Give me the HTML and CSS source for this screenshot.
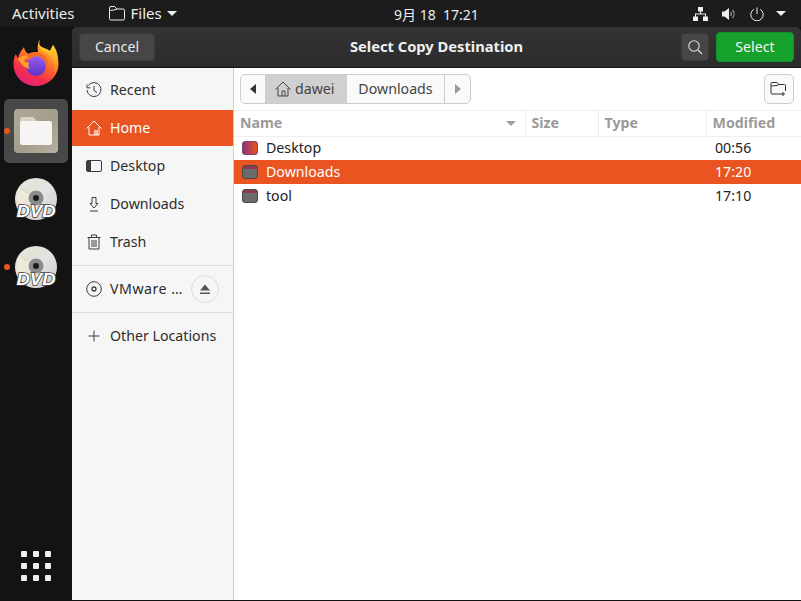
FILE: index.html
```html
<!DOCTYPE html>
<html lang="en">
<head>
<meta charset="utf-8">
<title>Select Copy Destination</title>
<link rel="stylesheet" href="styles.css">
</head>
<body>
<header class="topbar">
  <div class="top-left">
    <span class="activities">Activities</span>
    <span class="appmenu">
      <svg width="16" height="15" viewBox="0 0 16 15"><path d="M.5 12.500V2a1.500 1.500 0 0 1 1.500-1.500h3.500L8 3h6a1.500 1.500 0 0 1 1.500 1.500v8A1.500 1.500 0 0 1 14 14H2a1.500 1.500 0 0 1-1.500-1.500zM.5 4.500 5 4l3-1" fill="none" stroke="#eee" stroke-width="1"/></svg>
      <span class="menu-text">Files</span>
      <span class="caret"></span>
    </span>
  </div>
  <div class="clock">9月 18&nbsp; 17:21</div>
  <div class="tray">
    <svg width="15" height="14" viewBox="0 0 15 14"><path d="M5 0h5v4.500H8V6.500h5V9.500h2V14h-5V9.500h2V7.500H3v2h2V14H0V9.500h2V6.500h5V4.500H5z" fill="#eee"/></svg>
    <svg width="14" height="14" viewBox="0 0 14 14"><path d="M0 4.500h2.500L7 1v12L2.500 9.500H0z" fill="#eee"/><path d="M8.500 5a3 3 0 0 1 0 4M10.500 3a6 6 0 0 1 0 8" fill="none" stroke="#999" stroke-width="1.200"/></svg>
    <svg width="14" height="14" viewBox="0 0 14 14"><path d="M3.800 2.300a6.200 6.200 0 1 0 6.400 0M7 .5v6.500" fill="none" stroke="#eee" stroke-width="1"/></svg>
    <span class="caret tray-caret"></span>
  </div>
</header>
<div class="desktop">
  <nav class="dock">
    <div class="dock-item">
      <svg width="48" height="50" viewBox="0 0 48 50">
        <defs>
          <linearGradient id="ff" x1="0.800" y1="0" x2="0.300" y2="1"><stop offset="0" stop-color="#ffd52f"/><stop offset="0.400" stop-color="#ff7f26"/><stop offset="0.750" stop-color="#f5304a"/><stop offset="1" stop-color="#e0207c"/></linearGradient>
          <linearGradient id="ffy" x1="0.500" y1="0" x2="0.500" y2="1"><stop offset="0" stop-color="#ffdf33"/><stop offset="0.550" stop-color="#ffb02a"/><stop offset="1" stop-color="#ff7a24"/></linearGradient>
          <linearGradient id="ffb" x1="0.500" y1="0" x2="0.500" y2="1"><stop offset="0" stop-color="#9a5cf0"/><stop offset="1" stop-color="#5a32c4"/></linearGradient>
        </defs>
        <path d="M28 1C26 6 28 9 32 10c2 1 5 2 6 3 1-2 2-4 3-6 4 5 5.500 12 5.500 19C46.500 38 36 48 24 48 11 48 1.500 38 1.500 26c0-4 1-8 2.500-10 .5 2 1 3 2 4 1-5 4-8 6-11 .5 3 2 6 5 7 3-2 6-2 9-2-1-5 0-10 2-13z" fill="url(#ff)"/>
        <path d="M28 1c-2 5 0 8 4 9 2 1 5 2 6 3 1-2 2-4 3-6 3 5 5 11 5 17 0 4-1 8-3 11 0-6-1-12-5-17-3-3-6-5-9-6-2-3-2-8-1-11z" fill="url(#ffy)"/>
        <circle cx="24" cy="28" r="10" fill="url(#ffb)"/>
        <path d="M6 21c4-3 8-5 12-4-1 1-1 2-1 3-3 0-5 1-5 3 1 2 3 2 5 1-1 3-1 5 1 7-5-1-9-5-12-10z" fill="#ffa42b"/>
        <path d="M14 17c6-4 15-4 20 2 2 3 3 7 2 11-1-6-5-11-11-12-3 0-5 1-6 3-2-1-4-2-5-4z" fill="#f46d27"/>
      </svg>
    </div>
    <div class="dock-item active">
      <span class="dot"></span>
      <div class="files-tile">
        <svg width="32" height="28" viewBox="0 0 32 28"><path d="M0 3a3 3 0 0 1 3-3h10l5 5H0z" fill="#d8d4c8"/><rect y="4" width="32" height="24" rx="2.500" fill="#f7f5f3"/></svg>
      </div>
    </div>
    <div class="dock-item">
      <svg width="44" height="44" viewBox="0 0 44 44">
        <use href="#disc"/>
      </svg>
    </div>
    <div class="dock-item">
      <span class="dot"></span>
      <svg width="44" height="44" viewBox="0 0 44 44">
        <defs>
          <linearGradient id="sh" x1="0" y1="0" x2="1" y2="1"><stop offset="0" stop-color="#ececec"/><stop offset="0.300" stop-color="#e2e2d6"/><stop offset="0.500" stop-color="#e4e4e4"/><stop offset="1" stop-color="#cacaca"/></linearGradient>
          <g id="disc">
            <circle cx="22" cy="22" r="21" fill="url(#sh)"/>
            <path d="M6 10 21 20 5 29C2 22 3 15 6 10z" fill="#f0e8d8"/>
            <path d="M6 10 21 20 10 15z" fill="#cfe0cf"/>
            <circle cx="22" cy="21" r="7.500" fill="#8b8b8b"/>
            <circle cx="22" cy="21" r="3" fill="#1a1a1a"/>
            <text x="22" y="40" text-anchor="middle" textLength="39" lengthAdjust="spacingAndGlyphs" class="dvd-label">DVD</text>
          </g>
        </defs>
        <use href="#disc"/>
      </svg>
    </div>
    <div class="grid-btn">
      <i></i><i></i><i></i><i></i><i></i><i></i><i></i><i></i><i></i>
    </div>
  </nav>
  <main class="window">
    <div class="headerbar">
      <button class="hb-btn cancel">Cancel</button>
      <div class="title">Select Copy Destination</div>
      <div class="hb-right">
        <button class="hb-btn search">
          <svg width="16" height="16" viewBox="0 0 16 16"><circle cx="7" cy="7" r="5.200" fill="none" stroke="#ddd" stroke-width="1.100"/><path d="M11 11l4 4" stroke="#ddd" stroke-width="1.200"/></svg>
        </button>
        <button class="select">Select</button>
      </div>
    </div>
    <div class="body">
      <aside class="sidebar">
        <ul class="places">
          <li class="place">
            <svg class="pi" width="16" height="16" viewBox="0 0 16 16"><path d="M2.300 3.500A7 7 0 1 1 1 8M1 2.500v3.300h3.300M8 4v4.500l3 2" fill="none" stroke="#3d3d3d" stroke-width="1"/></svg>
            <span>Recent</span>
          </li>
          <li class="place selected">
            <svg class="pi" width="16" height="16" viewBox="0 0 16 16"><path d="M.5 8.500 8 1l7.500 7.500M3 7v8h10V7" fill="none" stroke="#fff" stroke-width="1"/><rect x="8" y="10" width="4" height="5" fill="#fff" opacity=".6"/></svg>
            <span>Home</span>
          </li>
          <li class="place">
            <svg class="pi" width="16" height="14" viewBox="0 0 16 14"><rect x=".5" y="1.500" width="15" height="11" rx="1.500" fill="none" stroke="#3d3d3d"/><path d="M1 2h4v10H1z" fill="#3d3d3d"/></svg>
            <span>Desktop</span>
          </li>
          <li class="place">
            <svg class="pi" width="16" height="16" viewBox="0 0 16 16"><path d="M6 1.500h4v6h2L8 12 4 7.500h2zM4 15h8" fill="none" stroke="#3d3d3d" stroke-width="1"/></svg>
            <span>Downloads</span>
          </li>
          <li class="place">
            <svg class="pi" width="16" height="16" viewBox="0 0 16 16"><path d="M1.500 3.500h13M5.500 3V1h5v2M3 3.500V15h10V3.500M6 6v7M8 6v7M10 6v7" fill="none" stroke="#3d3d3d" stroke-width="1"/></svg>
            <span>Trash</span>
          </li>
        </ul>
        <div class="sep"></div>
        <div class="place device">
          <svg class="pi" width="16" height="16" viewBox="0 0 16 16"><circle cx="8" cy="8" r="7.300" fill="none" stroke="#3d3d3d"/><circle cx="8" cy="8" r="2" fill="none" stroke="#3d3d3d" stroke-width="1.300"/></svg>
          <span class="device-name">VMware …</span>
          <span class="eject"><svg width="12" height="12" viewBox="0 0 12 12"><path d="M6 1.500l5 6H1zM1 9.500h10V11H1z" fill="#555"/></svg></span>
        </div>
        <div class="sep"></div>
        <div class="place">
          <svg class="pi" width="16" height="16" viewBox="0 0 16 16"><path d="M8 2.500v11M2.500 8h11" stroke="#3d3d3d" stroke-width="1"/></svg>
          <span>Other Locations</span>
        </div>
      </aside>
      <section class="content">
        <div class="pathrow">
          <div class="pathbar">
            <span class="seg arrow"><span class="tri-left"></span></span>
            <span class="seg current">
              <svg width="16" height="16" viewBox="0 0 16 16"><path d="M.5 8.500 8 1l7.500 7.500M3 7v8h10V7M7 15v-5h3v5" fill="none" stroke="#444" stroke-width="1"/></svg>
              <span class="seg-text">dawei</span>
            </span>
            <span class="seg crumb"><span class="seg-text">Downloads</span></span>
            <span class="seg arrow end"><span class="tri-right"></span></span>
          </div>
          <button class="newfolder">
            <svg width="18" height="16" viewBox="0 0 18 16"><path d="M1 12V2.500a1 1 0 0 1 1-1h5l2 2h5.500a1 1 0 0 1 1 1V10M1 5l6-.5 2-1M1 12a1 1 0 0 0 1 1h9M13 11v4M11 13h4" fill="none" stroke="#333" stroke-width="1"/></svg>
          </button>
        </div>
        <table class="files">
          <thead>
            <tr>
              <th class="c-name">Name<span class="sort"></span></th>
              <th class="c-size">Size</th>
              <th class="c-type">Type</th>
              <th class="c-mod">Modified</th>
            </tr>
          </thead>
          <tbody>
            <tr>
              <td><span class="fname"><span class="folder desk"></span><span class="ftext">Desktop</span></span></td><td></td><td></td><td>00:56</td>
            </tr>
            <tr class="row-sel">
              <td><span class="fname"><span class="folder"></span><span class="ftext">Downloads</span></span></td><td></td><td></td><td>17:20</td>
            </tr>
            <tr>
              <td><span class="fname"><span class="folder"></span><span class="ftext">tool</span></span></td><td></td><td></td><td>17:10</td>
            </tr>
          </tbody>
        </table>
      </section>
    </div>
  </main>
</div>
</body>
</html>
```
FILE: styles.css
```css
* { box-sizing: border-box; }
html, body { margin: 0; height: 100%; }
body {
  width: 801px;
  height: 601px;
  overflow: hidden;
  background: #111;
  font-family: "Noto Sans", "Noto Sans CJK SC", sans-serif;
  font-size: 14.2px;
  display: flex;
  flex-direction: column;
}
ul { list-style: none; margin: 0; padding: 0; }
button { font: inherit; padding: 0 0 2px; cursor: default; }

.topbar {
  height: 27px;
  flex: none;
  background: #1c1c1c;
  color: #eee;
  display: flex;
  align-items: center;
  padding: 0 15px 0 12px;
  font-size: 15px;
}
.top-left { width: 382px; display: flex; align-items: center; gap: 34px; }
.activities, .menu-text { margin-bottom: 2px; }
.appmenu { display: flex; align-items: center; gap: 6px; }
.caret { width: 0; height: 0; border: 5px solid transparent; border-top: 5px solid #eee; border-bottom: 0; }
.appmenu .caret { margin-left: -1px; }
.clock { font-size: 14px; }
.tray { margin-left: auto; display: flex; align-items: center; gap: 14px; }
.tray-caret { margin-left: -2px; }

.desktop { flex: 1; display: flex; min-height: 0; padding-bottom: 1px; }

.dock {
  width: 72px;
  flex: none;
  background: #131313;
  display: flex;
  flex-direction: column;
  align-items: center;
  padding: 4px 0 10px;
  gap: 4px;
}
.dock-item {
  position: relative;
  width: 64px;
  height: 64px;
  border-radius: 5px;
  display: flex;
  align-items: center;
  justify-content: center;
}
.dock-item.active { background: #484848; }
.dot {
  position: absolute;
  left: 0;
  top: 50%;
  margin-top: -3px;
  width: 6px;
  height: 6px;
  border-radius: 50%;
  background: #e95420;
}
.files-tile {
  width: 44px;
  height: 44px;
  border-radius: 4px;
  background: linear-gradient(135deg, #afa999, #a39d8d 55%, #b6b1a2);
  display: flex;
  align-items: center;
  justify-content: center;
}
.dvd-label {
  font-family: "Liberation Sans", sans-serif;
  font-weight: 700;
  font-style: italic;
  font-size: 16px;
  fill: #fff;
  stroke: #3a3a3a;
  stroke-width: 1.4;
  paint-order: stroke;
}
.grid-btn {
  margin-top: auto;
  width: 30px;
  display: grid;
  grid-template-columns: repeat(3, 6px);
  gap: 6px;
  margin-bottom: 9px;
}
.grid-btn i { width: 6px; height: 6px; border-radius: 1px; background: #eee; }

.window { flex: 1; display: flex; flex-direction: column; min-width: 0; }
.headerbar {
  height: 41px;
  flex: none;
  background: linear-gradient(#333, #2c2c2c);
  border-bottom: 1px solid #111;
  border-radius: 5px 5px 0 0;
  display: grid;
  grid-template-columns: 1fr auto 1fr;
  align-items: center;
  padding: 0 7px;
  color: #f0f0f0;
}
.title { font-weight: 700; font-size: 14.7px; margin-bottom: 2px; }
.hb-btn {
  height: 28px;
  background: #464646;
  color: #e8e8e8;
  border: 1px solid #3a3a3a;
  border-radius: 4px;
}
.cancel { width: 76px; justify-self: start; }
.hb-right { display: flex; justify-content: flex-end; align-items: center; gap: 7px; }
.search { width: 28px; padding: 0; display: flex; align-items: center; justify-content: center; }
.select {
  width: 78px;
  height: 30px;
  background: #16a02c;
  color: #f4f4f4;
  border: 1px solid #12902a;
  border-radius: 4px;
}

.body { flex: 1; display: flex; min-height: 0; background: #fff; }
.sidebar {
  width: 162px;
  flex: none;
  background: #f6f6f6;
  border-right: 1px solid #cfcfcf;
  padding-top: 4px;
  color: #2d2d2d;
}
.places { display: flex; flex-direction: column; gap: 2px; }
.place {
  height: 36px;
  display: flex;
  align-items: center;
  gap: 8px;
  padding-left: 14px;
}
.place span { margin-bottom: 2px; }
.pi { width: 16px; flex: none; }
.selected { background: #e95420; color: #fff; }
.sep { height: 1px; background: #dcdcdc; margin-top: 5px; margin-bottom: 5px; }
.device { height: 36px; }
.device-name { flex: none; width: 73px; letter-spacing: .5px; white-space: nowrap; }
.place .eject {
  width: 28px;
  height: 28px;
  margin: 0;
  border: 1px solid #dcdcdc;
  border-radius: 50%;
  display: flex;
  align-items: center;
  justify-content: center;
}

.content { flex: 1; display: flex; flex-direction: column; min-width: 0; background: #fff; }
.pathrow {
  height: 43px;
  flex: none;
  padding: 6px 7px 6px 6px;
  display: flex;
  align-items: flex-start;
  justify-content: space-between;
  border-bottom: 1px solid #efefef;
}
.pathbar {
  height: 30px;
  display: flex;
  border: 1px solid #cdcdcd;
  border-radius: 5px;
  overflow: hidden;
  color: #444;
  background: #fafafa;
}
.seg { display: flex; align-items: center; justify-content: center; border-right: 1px solid #cdcdcd; }
.seg.end { border-right: 0; }
.seg-text { margin-bottom: 2px; }
.arrow { width: 25px; }
.tri-left { width: 0; height: 0; border: 5px solid transparent; border-right: 6px solid #333; border-left: 0; }
.tri-right { width: 0; height: 0; border: 5px solid transparent; border-left: 6px solid #999; border-right: 0; }
.current { width: 81px; background: #d0d0d0; gap: 4px; justify-content: flex-start; padding-left: 9px; }
.crumb { width: 98px; }
.newfolder {
  width: 30px;
  height: 30px;
  padding: 0;
  background: #fafafa;
  border: 1px solid #cdcdcd;
  border-radius: 5px;
  display: flex;
  align-items: center;
  justify-content: center;
}

.files { width: 100%; border-collapse: collapse; table-layout: fixed; color: #222; }
.files th {
  height: 25px;
  padding: 0 0 2px 6px;
  text-align: left;
  font-weight: 700;
  color: #9a9a9a;
  border-bottom: 1px solid #efefef;
  border-left: 1px solid #efefef;
}
.files th:first-child { border-left: 0; }
.c-name { width: 291px; position: relative; }
.c-size { width: 73px; }
.c-type { width: 108px; }
.sort {
  position: absolute;
  right: 9px;
  top: 10px;
  width: 0;
  height: 0;
  border: 5px solid transparent;
  border-top: 5px solid #a0a0a0;
  border-bottom: 0;
}
.files td { height: 24px; padding: 0 0 2px 9px; }
.files td:first-child { padding: 0 0 0 8px; }
.fname { display: flex; align-items: center; gap: 8px; }
.ftext { margin-bottom: 2px; }
.folder {
  width: 16px;
  height: 14px;
  flex: none;
  border-radius: 3px;
  background: linear-gradient(#8d3a4c 0 3px, #6b6b6b 3px);
  border: 1px solid #4a4a4a;
}
.folder.desk { background: linear-gradient(90deg, #8b2f82, #e95420); border-color: #6e4a6e; }
.row-sel td { background: #e95420; color: #fff; }
```
